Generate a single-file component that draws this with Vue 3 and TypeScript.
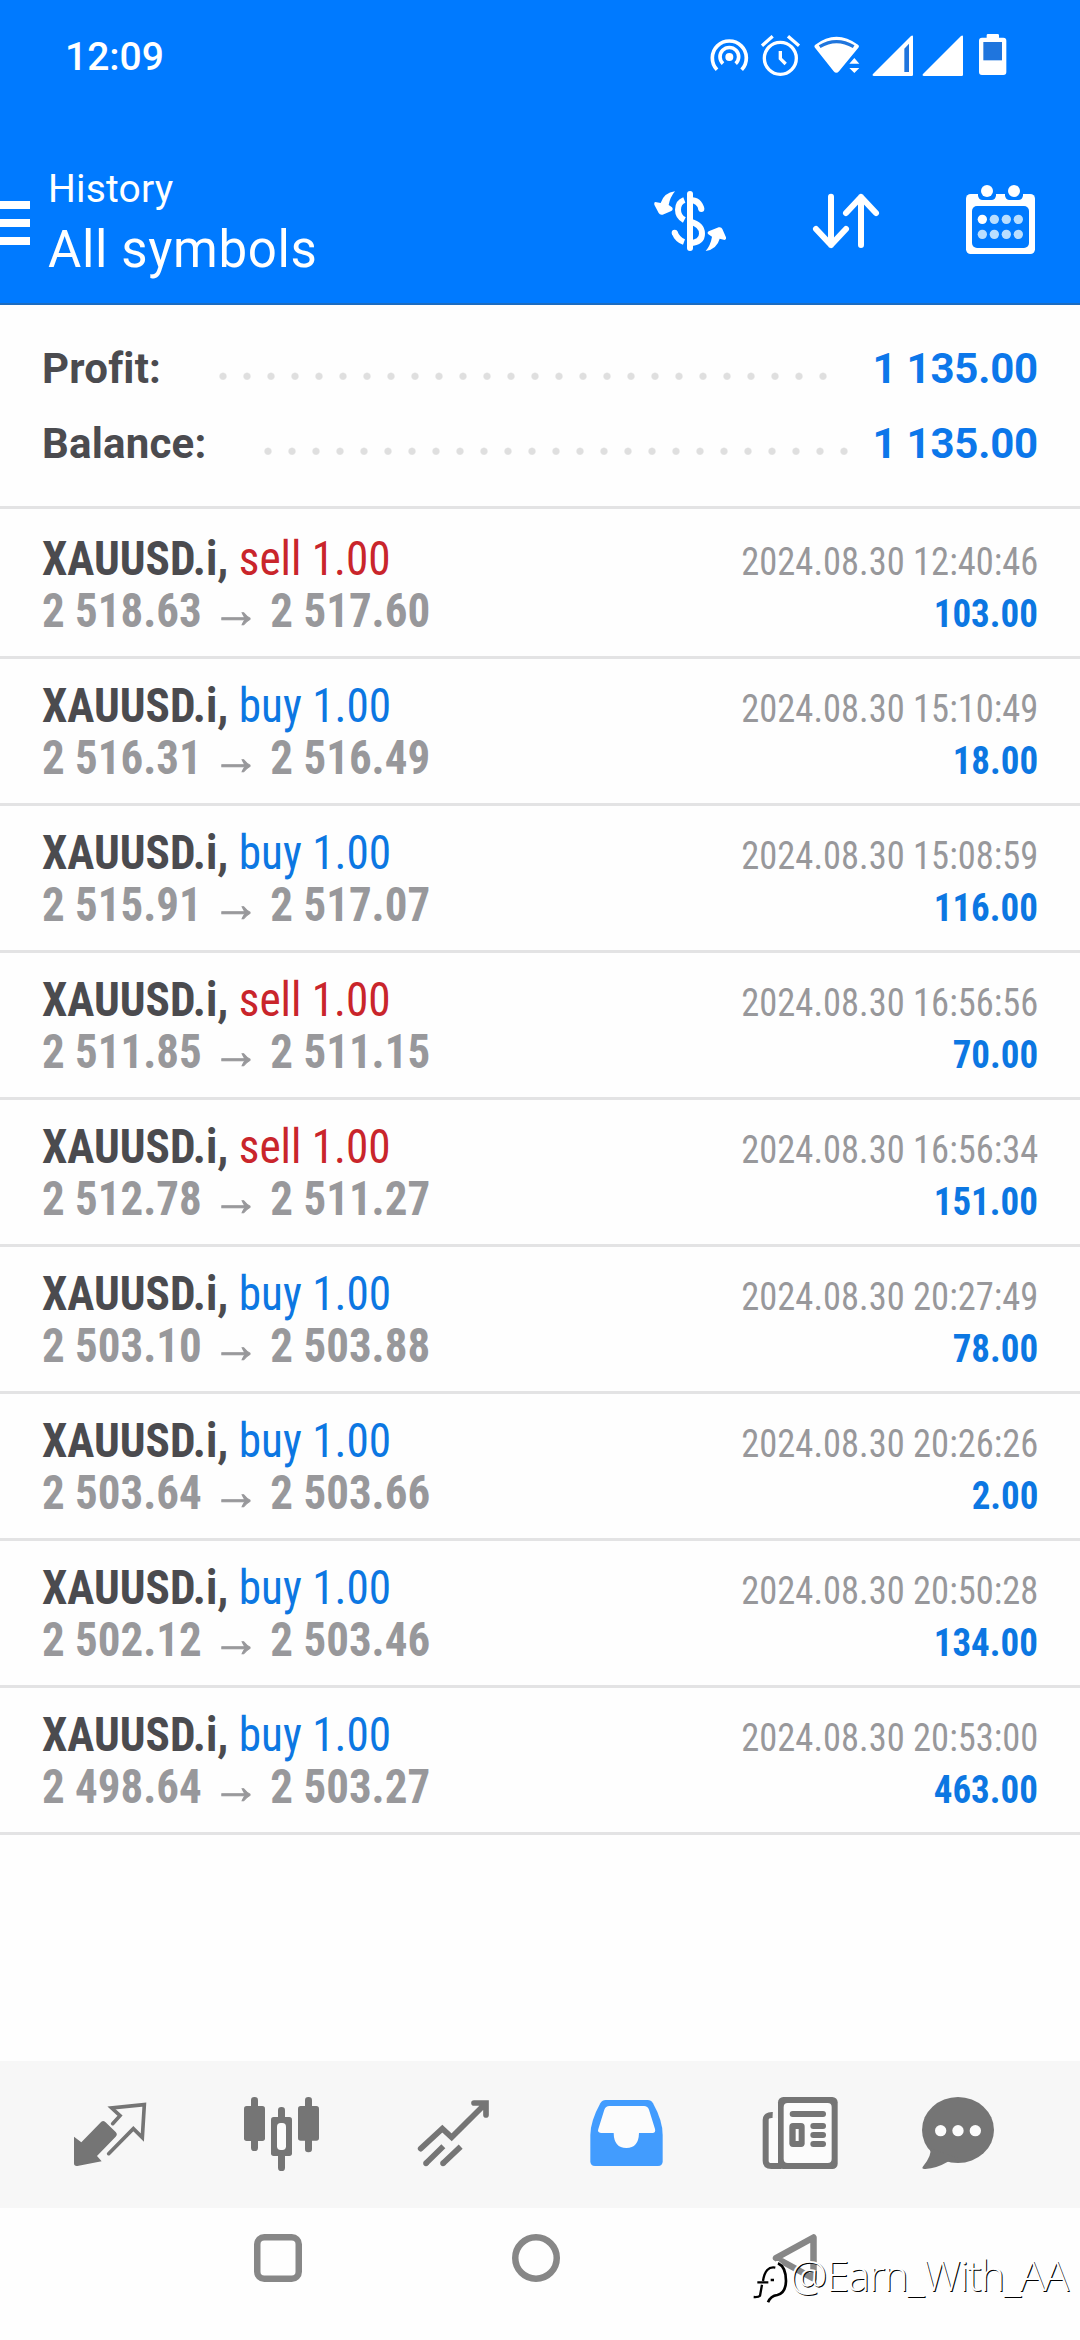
<script setup lang="ts">
interface Deal {
  side: 'buy' | 'sell'
  open: string
  close: string
  time: string
  profit: string
}

const DOT_PITCH = 24

const totals = [
  { label: 'Profit:', value: '1 135.00', dots: 26 },
  { label: 'Balance:', value: '1 135.00', dots: 25 },
]

const deals: Deal[] = [
  { side: 'sell', open: '2 518.63', close: '2 517.60', time: '2024.08.30 12:40:46', profit: '103.00' },
  { side: 'buy', open: '2 516.31', close: '2 516.49', time: '2024.08.30 15:10:49', profit: '18.00' },
  { side: 'buy', open: '2 515.91', close: '2 517.07', time: '2024.08.30 15:08:59', profit: '116.00' },
  { side: 'sell', open: '2 511.85', close: '2 511.15', time: '2024.08.30 16:56:56', profit: '70.00' },
  { side: 'sell', open: '2 512.78', close: '2 511.27', time: '2024.08.30 16:56:34', profit: '151.00' },
  { side: 'buy', open: '2 503.10', close: '2 503.88', time: '2024.08.30 20:27:49', profit: '78.00' },
  { side: 'buy', open: '2 503.64', close: '2 503.66', time: '2024.08.30 20:26:26', profit: '2.00' },
  { side: 'buy', open: '2 502.12', close: '2 503.46', time: '2024.08.30 20:50:28', profit: '134.00' },
  { side: 'buy', open: '2 498.64', close: '2 503.27', time: '2024.08.30 20:53:00', profit: '463.00' },
]
</script>

<template>
  <div class="screen">
    <header class="header">
      <div class="status">
        <span class="clock">12:09</span>
        <svg class="status-icons" viewBox="180 30 930 150" fill="#fff">
          <!-- hotspot -->
          <g fill="none" stroke="#fff" stroke-width="11">
            <path d="M201 149A51 51 0 1 1 275 149" />
            <path d="M219 131A28 28 0 1 1 257 131" />
          </g>
          <circle cx="238" cy="111" r="12" />
          <!-- alarm -->
          <g fill="none" stroke="#fff" stroke-width="10">
            <circle cx="391" cy="115" r="48" />
            <path d="M391 93V116L407 132" />
            <path d="M336 77L368 49M414 49L447 77" />
          </g>
          <!-- wifi -->
          <path d="M496 74Q559 26 624 74Q629 78 625 83L567 154Q559 163 551 154L495 83Q491 78 496 74Z" />
          <path d="M509 80Q559 50 611 80" fill="none" stroke="#1f75dd" stroke-width="10" />
          <path d="M598 131L613 114L628 131ZM598 144L613 159L628 144Z" />
          <!-- signal bars -->
          <path d="M672 168Q665 167 669 162L783 48Q789 44 789 50V164Q789 168 785 168Z" />
          <path d="M763 86L777 71V156H763Z" fill="#1f75dd" />
          <path d="M822 168Q815 167 819 162L933 48Q939 44 939 50V164Q939 168 935 168Z" />
          <!-- battery -->
          <path d="M1014 42H1043Q1047 42 1047 46V53H1060Q1069 53 1069 62V156Q1069 165 1060 165H996Q987 165 987 156V62Q987 53 996 53H1010V46Q1010 42 1014 42Z" />
          <path d="M1000 66H1056V121H1000Z" fill="#1f75dd" />
        </svg>
      </div>
      <div class="appbar">
        <div class="menu"><i></i><i></i><i></i></div>
        <div class="titles">
          <div class="subtitle">History</div>
          <div class="title">All symbols</div>
        </div>
        <div class="actions">
          <svg width="77" height="74" viewBox="36 549 231 222" fill="none" stroke="#fff" stroke-width="18">
            <path d="M133 600Q114 607 114 629Q114 650 133 660" />
            <path d="M104 698Q112 719 132 726" />
            <path d="M104 698V698M184 627V627" stroke-linecap="round" />
            <path d="M150 600Q178 600 184 627" />
            <path d="M150 665Q186 674 186 701Q186 727 150 729" />
            <rect x="141" y="573" width="18" height="180" rx="9" fill="#fff" stroke="none" />
            <path fill="#fff" stroke="none" d="M105 574Q72 578 62 609L46 606Q41 607 43 614L56 639Q60 646 68 644L94 633Q101 629 96 622L86 615Q90 592 105 574ZM197 753Q231 747 239 716L254 720Q260 719 258 712L247 687Q244 680 236 682L206 694Q200 698 205 703L216 710Q212 735 197 753Z" />
          </svg>
          <svg width="72" height="74" viewBox="510 549 216 222" fill="none" stroke="#fff" stroke-width="18" stroke-linecap="round" stroke-linejoin="round">
            <path d="M573 590V735M528 687L573 735L618 687M663 735V591M618 639L663 591L708 639" />
          </svg>
          <svg width="74" height="74" viewBox="969 549 222 222" fill="#fff">
            <rect x="978" y="582" width="207" height="180" rx="14" />
            <g fill="#007aff">
              <rect x="996" y="618" width="171" height="126" rx="15" />
              <rect x="1014" y="560" width="54" height="40" rx="14" />
              <rect x="1095" y="560" width="54" height="40" rx="14" />
            </g>
            <circle cx="1041" cy="573" r="18" />
            <circle cx="1122" cy="573" r="18" />
            <circle cx="1027" cy="658" r="14" />
            <g fill="#b9deff">
              <circle cx="1063" cy="658" r="14" />
              <circle cx="1099" cy="658" r="14" />
              <circle cx="1135" cy="658" r="14" />
              <circle cx="1027" cy="703" r="14" />
              <circle cx="1063" cy="703" r="14" />
              <circle cx="1099" cy="703" r="14" />
              <circle cx="1135" cy="703" r="14" />
            </g>
          </svg>
        </div>
      </div>
    </header>

    <section class="summary">
      <div v-for="t in totals" :key="t.label" class="total">
        <span class="total-label">{{ t.label }}</span>
        <span class="leader" :style="{ width: t.dots * DOT_PITCH + 'px' }"></span>
        <span class="total-value">{{ t.value }}</span>
      </div>
    </section>

    <main class="deals">
      <article v-for="d in deals" :key="d.time" class="deal">
        <div class="line">
          <span class="symbol"><b>XAUUSD.i,</b> <span :class="d.side">{{ d.side }} 1.00</span></span>
          <span class="time">{{ d.time }}</span>
        </div>
        <div class="line second">
          <span class="prices">{{ d.open }} <span class="arrow">→</span> {{ d.close }}</span>
          <span class="profit">{{ d.profit }}</span>
        </div>
      </article>
    </main>

    <nav class="tabs">
      <svg class="quotes" width="77" height="80" viewBox="66 42 231 240" fill="#757575">
        <path d="M72 170L94 187L151 128Q158 119 166 126L197 156Q204 163 197 170L141 228L155 244L82 258Q72 259 72 250Z" />
        <path d="M188 131L210 107L185 84L283 74L277 173L250 146L176 221" fill="none" stroke="#757575" stroke-width="11" stroke-linecap="round" />
      </svg>
      <svg class="chart" width="79" height="80" viewBox="576 42 237 240" fill="#757575">
        <rect x="603" y="51" width="21" height="162" rx="10" />
        <rect x="582" y="78" width="63" height="105" rx="8" />
        <rect x="684" y="81" width="21" height="192" rx="10" />
        <rect x="663" y="111" width="63" height="117" rx="8" />
        <rect x="681" y="129" width="27" height="81" rx="11" fill="#fcfcfc" />
        <rect x="765" y="51" width="21" height="166" rx="10" />
        <rect x="744" y="78" width="63" height="104" rx="8" />
      </svg>
      <svg class="trade" width="75" height="80" viewBox="1098 42 225 240" fill="none" stroke="#757575" stroke-width="17" stroke-linecap="round">
        <path d="M1112 206L1177 146L1205 172L1306 71M1272 69H1308V105" />
        <path d="M1128 250L1180 199M1179 250L1232 200" stroke-linecap="butt" />
        <path d="M1128 250V250M1179 250V250" />
      </svg>
      <svg class="history" width="77" height="80" viewBox="54 42 231 240">
        <path fill="#429cfe" d="M107 60H233Q243 60 249 70Q278 122 278 165V244Q278 258 264 258H75Q61 258 61 244V165Q62 122 91 70Q97 60 107 60Z" />
        <path fill="#fcfcfc" d="M118 78H222Q233 78 237 89L255 147Q258 159 247 159H207Q206 204 169 204Q132 204 131 159H93Q81 158 85 147L103 89Q107 78 118 78Z" />
      </svg>
      <svg class="news" width="78" height="80" viewBox="573 42 234 240" fill="#757575">
        <rect x="596" y="114" width="30" height="136" rx="8" fill="#fcfcfc" />
        <path d="M608 105Q587 104 587 120V242Q587 258 604 258H634" fill="none" stroke="#757575" stroke-width="18" />
        <rect x="624" y="51" width="179" height="216" rx="16" />
        <rect x="641" y="69" width="144" height="180" rx="12" fill="#fcfcfc" />
        <rect x="659" y="93" width="109" height="18" rx="9" />
        <rect x="658" y="129" width="46" height="72" rx="11" />
        <rect x="677" y="147" width="9" height="36" fill="#fcfcfc" />
        <rect x="721" y="129" width="47" height="18" rx="9" />
        <rect x="721" y="156" width="47" height="18" rx="9" />
        <rect x="721" y="183" width="47" height="18" rx="9" />
      </svg>
      <svg class="chat" width="76" height="80" viewBox="1050 42 228 240" fill="#757575">
        <ellipse cx="1164" cy="150" rx="108" ry="99" />
        <path d="M1080 205Q1087 225 1060 258Q1052 268 1066 267Q1100 265 1132 246L1164 235Z" />
        <g fill="#fcfcfc">
          <circle cx="1112" cy="152" r="17" />
          <circle cx="1164" cy="152" r="17" />
          <circle cx="1216" cy="152" r="17" />
        </g>
      </svg>
    </nav>

    <footer class="sysnav">
      <svg width="48" height="48" viewBox="0 0 48 48"><rect x="3.25" y="3.25" width="41.5" height="41.5" rx="7" /></svg>
      <svg width="48" height="48" viewBox="0 0 48 48"><circle cx="24" cy="24" r="20.75" /></svg>
      <svg width="48" height="48" viewBox="0 0 48 48"><path d="M6 24L43.5 3.5V44.5Z" /></svg>
      <div class="watermark">
        <svg width="36" height="42" viewBox="184 90 108 126" fill="none">
          <path d="M247 103Q214 98 212 147M196 149H228M208 154L202 194M256 92Q282 102 282 147Q280 182 256 189Q236 194 228 210" stroke="#fff" stroke-width="10" />
          <path d="M254 110Q224 104 217 150M200 154H233M214 161L208 194Q204 199 189 198M240 147H250" stroke="#000" stroke-width="7" />
          <path d="M262 97Q286 108 286 150Q285 186 260 192Q240 194 232 214" stroke="#000" stroke-width="8" />
        </svg>
        <span>@Earn_With_AA</span>
      </div>
    </footer>
  </div>
</template>

<style>
body {
  margin: 0;
  background: #fefefe;
}
</style>

<style scoped>
.screen {
  width: 1080px;
  height: 2340px;
  display: flex;
  flex-direction: column;
  overflow: hidden;
  background: #fefefe;
  font-family: Roboto, "Liberation Sans", sans-serif;
}
svg {
  display: block;
  flex: none;
}
.header {
  box-sizing: border-box;
  height: 305px;
  background: #007aff;
  border-bottom: 2px solid #1c6cc0;
  color: #fff;
}
.status {
  height: 112px;
  display: flex;
  justify-content: space-between;
  padding: 0 60px 0 65px;
}
.clock {
  font-size: 39px;
  font-weight: 500;
  line-height: 114px;
}
.status-icons {
  width: 310px;
  height: 50px;
  margin-top: 30px;
}
.appbar {
  display: flex;
  height: 191px;
}
.menu {
  width: 30px;
  padding-top: 89px;
  display: flex;
  flex-direction: column;
  gap: 10px;
}
.menu i {
  height: 8px;
  background: #fff;
}
.titles {
  padding: 52px 0 0 18px;
  flex: 1;
}
.subtitle {
  font-size: 39px;
  line-height: 50px;
  letter-spacing: 0.2px;
}
.title {
  font-size: 51px;
  line-height: 72px;
  letter-spacing: 0.65px;
}
.actions {
  display: flex;
  gap: 81px;
  padding: 71px 43px 0 0;
}
.summary {
  padding: 26px 42px 25px;
  border-bottom: 3px solid #e3e3e4;
}
.total {
  display: flex;
  height: 75px;
  line-height: 75px;
  font-size: 42px;
  font-weight: 700;
}
.total-label {
  color: #4b4b4f;
  letter-spacing: 0.2px;
}
.leader {
  margin-left: 50px;
  background: radial-gradient(circle at 12px 45.3px, #dfdfdf 3px, rgba(223, 223, 223, 0) 4.2px) repeat-x;
  background-size: 24px 75px;
}
.total-value {
  margin-left: auto;
  color: #0c77ea;
  letter-spacing: -0.2px;
}
.deal {
  height: 123px;
  padding: 21px 42px 0;
  border-bottom: 3px solid #e3e3e4;
}
.deal:first-child {
  padding-top: 24px;
}
.line {
  display: flex;
  justify-content: space-between;
  align-items: baseline;
  height: 51px;
  line-height: 51px;
  font-family: "Roboto Condensed", Roboto, sans-serif;
  white-space: nowrap;
}
.second {
  margin-top: -0.5px;
}
.symbol,
.prices {
  font-size: 48px;
  color: #4b4b4f;
  transform: scaleX(0.942);
  transform-origin: left;
}
.sell {
  color: #c9252b;
}
.buy {
  color: #0c77e2;
}
.prices {
  font-weight: 700;
  color: #98989b;
  transform: scaleX(0.937);
}
.arrow {
  font-size: 51px;
  line-height: 1;
  -webkit-text-stroke: 1px #98989b;
}
.time,
.profit {
  font-size: 39px;
  color: #98989b;
  transform: scaleX(0.936);
  transform-origin: right;
}
.profit {
  font-weight: 700;
  color: #0c77e2;
  transform: scaleX(0.948);
}
.tabs {
  margin-top: auto;
  height: 114px;
  padding: 33px 0 0 72px;
  display: flex;
  background: #f7f7f7;
}
.chart {
  margin-left: 93px;
}
.trade {
  margin-left: 95px;
}
.history {
  margin-left: 97px;
}
.news {
  margin-left: 96px;
}
.chat {
  margin-left: 81px;
}
.sysnav {
  position: relative;
  height: 106px;
  padding: 26px 0 0 254px;
  display: flex;
  gap: 210px;
  fill: none;
  stroke: #878787;
  stroke-width: 6.5;
  stroke-linejoin: round;
}
.watermark {
  position: absolute;
  left: 752px;
  top: 46px;
  display: flex;
  stroke: none;
}
.watermark svg {
  margin-top: 7px;
}
.watermark span {
  margin-left: 2px;
  font: 300 42px/42px "Open Sans", "Noto Sans", sans-serif;
  letter-spacing: -1.3px;
  color: #fff;
  text-shadow: 1px 1px 0 #000;
}
</style>
